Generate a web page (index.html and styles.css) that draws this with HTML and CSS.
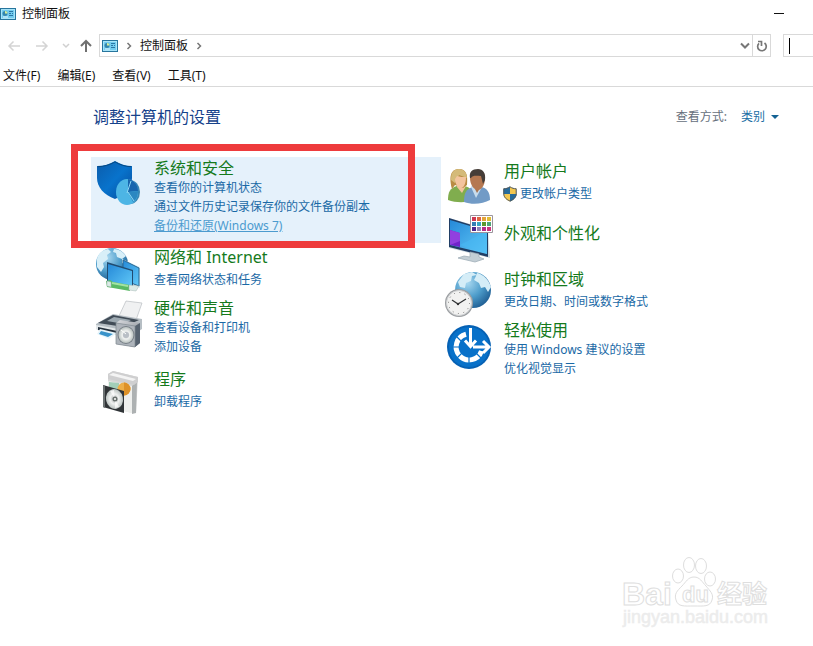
FILE: index.html
```html
<!DOCTYPE html>
<html lang="zh-CN">
<head>
<meta charset="utf-8">
<title>控制面板</title>
<link rel="stylesheet" href="styles.css">
</head>
<body>
<svg class="defs" aria-hidden="true">
  <defs>
    <linearGradient id="screen" x1="0" y1="0" x2="1" y2="1"><stop offset="0" stop-color="#2589d8"/><stop offset="1" stop-color="#62caf8"/></linearGradient>
    <linearGradient id="shieldBlue" x1="0" y1="0" x2="1" y2="1"><stop offset="0" stop-color="#0b5cab"/><stop offset=".5" stop-color="#0873cc"/><stop offset="1" stop-color="#064b9b"/></linearGradient>
    <radialGradient id="globe" cx=".35" cy=".3" r=".75"><stop offset="0" stop-color="#a9d8f0"/><stop offset=".55" stop-color="#4e9dcb"/><stop offset="1" stop-color="#205f94"/></radialGradient>
    <linearGradient id="metal" x1="0" y1="0" x2="1" y2="1"><stop offset="0" stop-color="#d8dade"/><stop offset="1" stop-color="#80878f"/></linearGradient>
    <radialGradient id="disc"><stop offset="0" stop-color="#9da3a4"/><stop offset=".5" stop-color="#f0f2f1"/><stop offset="1" stop-color="#bac2c0"/></radialGradient>
    <symbol id="panel" viewBox="0 0 16 12">
      <rect x=".5" y=".5" width="15" height="11" fill="#72ccef" stroke="#27759d"/>
      <rect x="1.5" y="1.5" width="13" height="9" fill="none" stroke="#a8e4f8"/>
      <circle cx="5" cy="5.5" r="2.5" fill="#3486ae"/><path d="M5 5.500V3a2.500 2.500 0 0 1 2.500 2.500Z" fill="#d9ef9a"/>
      <path d="M9 3.500h4M9 5.500h2M12 5.500h1M9 7.500h4" stroke="#2b77a5"/><path d="M3 9h5" stroke="#eafaff"/>
    </symbol>
  </defs>
</svg>

<header class="titlebar">
  <svg class="panel-icon" aria-hidden="true"><use href="#panel"/></svg>
  <span class="window-title">控制面板</span>
  <button class="minimize" type="button" aria-label="最小化"><svg width="10" height="10"><path d="M0 4.500h10" stroke="#111"/></svg></button>
</header>

<div class="navbar">
  <button class="nav-button nav-history" type="button" aria-label="后退"><svg width="14" height="14" fill="none" stroke="#d4d4d4" stroke-width="1.500"><path d="M13 7H2M6.500 2.500 2 7l4.500 4.500"/></svg></button>
  <button class="nav-button nav-history" type="button" aria-label="前进"><svg width="14" height="14" fill="none" stroke="#d4d4d4" stroke-width="1.500"><path d="M1 7h11M7.500 2.500 12 7l-4.500 4.500"/></svg></button>
  <button class="nav-button nav-recent" type="button" aria-label="最近"><svg width="8" height="6" fill="none" stroke="#d0d0d0" stroke-width="1.500"><path d="m1 1 3 3 3-3"/></svg></button>
  <button class="nav-button nav-up" type="button" aria-label="向上"><svg width="14" height="14" fill="none" stroke="#707070" stroke-width="2"><path d="M7 13V2M2 7l5-5 5 5"/></svg></button>
  <div class="address">
    <svg class="panel-icon" aria-hidden="true"><use href="#panel"/></svg>
    <svg class="crumb-arrow" viewBox="0 0 6 8" fill="none" stroke="#777" stroke-width="1.500"><path d="m1.500 1 3 3-3 3"/></svg>
    <a class="crumb" href="#">控制面板</a>
    <svg class="crumb-arrow" viewBox="0 0 6 8" fill="none" stroke="#777" stroke-width="1.500"><path d="m1.500 1 3 3-3 3"/></svg>
    <button class="address-drop" type="button" aria-label="历史记录"><svg width="10" height="8" fill="none" stroke="#777" stroke-width="2"><path d="m1 1.500 4 4 4-4"/></svg></button>
    <button class="refresh" type="button" aria-label="刷新"><svg width="12" height="14" fill="none" stroke="#777" stroke-width="1.700"><path d="M8.500 4A4.300 4.300 0 1 1 3 4.300M2 2.500h3.500V7"/></svg></button>
  </div>
  <div class="search">
    <input class="search-input" type="text" aria-label="搜索控制面板">
    <span class="caret"></span>
  </div>
</div>

<nav class="menubar">
  <button type="button">文件(F)</button>
  <button type="button">编辑(E)</button>
  <button type="button">查看(V)</button>
  <button type="button">工具(T)</button>
</nav>

<main class="content">
  <div class="heading">
    <h1>调整计算机的设置</h1>
    <div class="view-by">
      <label for="view">查看方式:</label>
      <span class="view-select">
        <select id="view"><option>类别</option></select>
        <svg width="8" height="4" aria-hidden="true"><path d="M0 0h8L4 4Z" fill="#146294"/></svg>
      </span>
    </div>
  </div>

  <div class="categories">
    <div class="column">
      <section class="category selected">
        <svg class="icon" viewBox="0 0 50 50" aria-hidden="true">
          <path d="M2 8C9 8 15 6 20 3c5 3 11 5 17 5v12c0 9-7 17-17 21C9 37 2 29 2 20Z" fill="url(#shieldBlue)"/>
          <path d="M2.700 8.700C9 8.700 15 6.700 20 3.900c5 2.800 10 4.800 16.300 4.800" fill="none" stroke="#064983"/>
          <ellipse cx="35" cy="34" rx="10" ry="12" fill="#3886b4"/>
          <ellipse cx="32" cy="34" rx="11" ry="13" fill="#4db5e5"/>
          <path d="M33 34V21c6 1 10 6 10 12Z" fill="#1765ae"/><path d="m33 34 10-1c0 5-2 9-5 11Z" fill="#2b87c1"/>
          <path d="m32 35 4-12M33 34l6 9" stroke="#8ed8f4" fill="none"/>
        </svg>
        <div class="details">
          <h2><a href="#">系统和安全</a></h2>
          <a href="#">查看你的计算机状态</a>
          <a href="#">通过文件历史记录保存你的文件备份副本</a>
          <a class="hovered" href="#">备份和还原(Windows 7)</a>
        </div>
        <div class="marker"></div>
      </section>

      <section class="category">
        <svg class="icon" viewBox="0 0 50 50" aria-hidden="true">
          <circle cx="17" cy="17" r="16" fill="url(#globe)"/>
          <path d="M2 12c1-5 5-9 11-10l3 3-4 3 1 4-5 4 1 4-3 5-4-5ZM19 2c5 0 9 3 12 7l-4 3-5-2-1-4-3-1Z" fill="#d8eff8"/>
          <path d="m27 12 18 8v21l-8-4V20l-10-4Z" fill="#d8f0fa"/><path d="m28 13 16 8v18l-16-6Z" fill="url(#screen)" stroke="#28658f"/>
          <path d="m12 15 26 8v20l-26-7Z" fill="#214c71"/><path d="m13 17 24 7v17l-24-6Z" fill="url(#screen)"/>
          <path d="m11 34 4-1 3 2 17 3v6l-17-3-6-1Z" fill="#59ba64"/><path d="m17 36 16 3" stroke="#a4e2a1" stroke-width="2"/>
          <path d="m12 34 4 1v5l-4-1ZM34 38l10 1-3 5-7-1Z" fill="#dcebe7" stroke="#a5b7b5" stroke-width=".5"/>
        </svg>
        <div class="details single">
          <h2><a href="#">网络和 Internet</a></h2>
          <a href="#">查看网络状态和任务</a>
        </div>
      </section>

      <section class="category tall">
        <svg class="icon" viewBox="0 0 50 50" aria-hidden="true">
          <path d="m31 3 16 2-6 17-17-4Z" fill="#f0f1f2" stroke="#b9bdc1" stroke-width=".7"/>
          <path d="m1 26 17-10 29 5v10L33 40 1 31Z" fill="#b6bec4"/>
          <path d="m3 25 15-8 26 5-15 7Z" fill="#414c57"/><path d="m12 23 7-4 17 3-7 4Z" fill="#9da9b1"/>
          <path d="m1 27 28 5v5L1 31Z" fill="#e2e7e9"/><path d="m3 29 24 5v3L3 32Z" fill="#26323e"/>
          <path d="m5 31 17 4-8 6-12-5Z" fill="#e7f5fb"/><path d="m6 33 12 3-5 3-9-3Z" fill="#3993ca"/>
          <path d="m21 25 4-3 20 3v20l-5 4-19-3Z" fill="url(#metal)"/><path d="m40 28 5-3v20l-5 4Z" fill="#56626f"/>
          <path d="m21 25 19 3v21l-19-3Z" fill="#aeb4bb" stroke="#808991" stroke-width=".7"/>
          <ellipse cx="31" cy="37" rx="8.500" ry="9" fill="#777f87"/><ellipse cx="31" cy="37" rx="7.500" ry="8" fill="url(#disc)"/>
          <circle cx="31" cy="37" r="3" fill="#b9bfc6"/><path d="m26 32 5 4" stroke="#fff"/>
        </svg>
        <div class="details">
          <h2><a href="#">硬件和声音</a></h2>
          <a href="#">查看设备和打印机</a>
          <a href="#">添加设备</a>
        </div>
      </section>

      <section class="category">
        <svg class="icon" viewBox="0 0 50 50" aria-hidden="true">
          <path d="m13 5 5-3 25 6-2 36-8-1-20-6Z" fill="#d8d8d8"/><path d="m13 12 24 5v27l-24-5Z" fill="#eeefed"/>
          <path d="m37 17 5-5-1 32-4 1Z" fill="#adb1b2"/><path d="m13 5 5-3 25 6v5l-4 3-26-6Z" fill="#cfcfd0"/><path d="m14 6 4-2 23 6-3 2Z" fill="#f4f4f4"/>
          <path d="m14 13 10 1v11l-10-3Z" fill="#a2ceb8"/><circle cx="29" cy="20" r="6.500" fill="#edae48"/><path d="M29 13.500a6.500 6.500 0 0 1 0 13V20Z" fill="#dd9128"/>
          <path d="m8 16 21 6v22L8 38Z" fill="#303437"/><path d="m8 16 2 1v22l-2-1Z" fill="#6b7172"/>
          <ellipse cx="19.500" cy="30" rx="8.500" ry="10" transform="rotate(-12 19.500 30)" fill="url(#disc)"/><path d="m20 30-5-8 4-1ZM20 30l4 8-4 1Z" fill="#fff" opacity=".7"/>
          <circle cx="20" cy="30" r="2.500" fill="#69716e"/><circle cx="20" cy="30" r="1" fill="#fff"/>
        </svg>
        <div class="details single">
          <h2><a href="#">程序</a></h2>
          <a href="#">卸载程序</a>
        </div>
      </section>
    </div>

    <div class="column">
      <section class="category roomy">
        <svg class="icon" viewBox="0 0 50 50" aria-hidden="true">
          <path d="M3 39c0-8 2-12 9-14h7c6 1 10 5 10 14-8 3-18 3-26 0Z" fill="#80ad4e"/><path d="m12 26 5 6 4-7-2-5h-6Z" fill="#f1c29b"/>
          <path d="M7 28C4 17 5 8 14 8c7 0 9 5 8 16l-4 3-8-3Z" fill="#b98b43"/><path d="M6 19c0-7 2-11 8-11 5 0 8 4 8 9l-8-3-4 8Z" fill="#d4ba79"/>
          <path d="M12 15c3 1 6 1 9 1 0 8-3 11-5 11-3 0-6-4-6-9Z" fill="#f3c49e"/>
          <path d="M19 41c0-9 2-13 9-15h8c6 1 9 5 9 13-7 4-18 5-26 2Z" fill="#729bc6"/><path d="m26 26 5 11 6-11-2-4h-7Z" fill="#c8dced"/><path d="m27 22 5 10 5-8-2-5h-7Z" fill="#a87450"/>
          <path d="M25 17c0-5 3-8 7-8 5 0 8 3 8 8 0 8-4 12-7 12-4 0-8-5-8-12Z" fill="#b57851"/><path d="M25 17c-1-6 2-9 8-9 5 0 8 4 7 11l-2 4-2-8c-5 0-8-1-10 2Z" fill="#453d38"/>
        </svg>
        <div class="details single">
          <h2><a href="#">用户帐户</a></h2>
          <a class="with-shield" href="#"><svg width="14" height="16" viewBox="0 0 14 16" aria-hidden="true"><path d="M7 .5c2 1.500 4 2 6.500 2V8c0 3.500-3 6-6.500 7.500C3.500 14 .5 11.500.5 8V2.500C3 2.500 5 2 7 .5Z" fill="#f5c84f"/><path d="M7 .5V8H.5V2.500C3 2.500 5 2 7 .5ZM7 8h6.500c0 3.500-3 6-6.500 7.500Z" fill="#286c9b"/><path d="M7 .8c2 1.400 4 1.900 6.200 2V8c0 3.300-2.900 5.600-6.200 7.100C3.700 13.600.8 11.300.8 8V2.800C3 2.700 5 2.200 7 .8Z" fill="none" stroke="#4c5865"/></svg>更改帐户类型</a>
        </div>
      </section>

      <section class="category roomy">
        <svg class="icon" viewBox="0 0 50 50" aria-hidden="true">
          <path d="m4 3 39 11 2 29L4 33Z" fill="#d1dce3"/><path d="m4 3 39 12v27L4 32Z" fill="#213e65"/><path d="m5 5 37 11v23L5 30Z" fill="url(#screen)"/>
          <path d="m5 15 10 3v14L5 30Z" fill="#7124cb"/><path d="m5 15 10 3v8L5 30Z" fill="#9140df"/><path d="m15 30 27-14v23Z" fill="#48baf4" opacity=".55"/>
          <path d="m25 37 9 2v3l5 2-9 3-17-4 6-2 6 1Z" fill="#c3ced5" stroke="#98a7b1" stroke-width=".7"/>
          <path d="M25.500.5h22v17h-22Z" fill="#fff" stroke="#9b949d"/>
          <path d="M27 2h4v4h-4Z" fill="#cf3852"/><path d="M32 2h4v4h-4Z" fill="#df6541"/><path d="M37 2h4v4h-4Z" fill="#e4a338"/><path d="M42 2h4v4h-4Z" fill="#e0bc35"/>
          <path d="M27 7h4v4h-4Z" fill="#337eb5"/><path d="M32 7h4v4h-4Z" fill="#36a5c2"/><path d="M37 7h4v4h-4Z" fill="#5b982b"/><path d="M42 7h4v4h-4Z" fill="#4da575"/>
          <path d="M27 12h4v4h-4Z" fill="#4b278e"/><path d="M32 12h4v4h-4Z" fill="#9183b7"/><path d="M37 12h4v4h-4Z" fill="#b62c86"/><path d="M42 12h4v4h-4Z" fill="#cc347c"/>
        </svg>
        <div class="details title-only">
          <h2><a href="#">外观和个性化</a></h2>
        </div>
      </section>

      <section class="category">
        <svg class="icon" viewBox="0 0 50 50" aria-hidden="true">
          <circle cx="28" cy="21" r="18" fill="url(#globe)"/><path d="m13 13 6-8 8-2 5 3-5 1-1 5-5 2-1 5-5-1ZM32 4c6 1 12 7 14 14l-3 5-3-5-4 1-2-5-5-3 2-4Z" fill="#d5edf7"/>
          <circle cx="14" cy="34" r="14" fill="#9c9fa2"/><circle cx="14" cy="34" r="12.500" fill="#f2f2f1" stroke="#d0d2d4"/>
          <circle cx="14" cy="34" r="10.500" fill="none" stroke="#777" stroke-width="1" stroke-dasharray="1 4.500"/><path d="m7 31 6 4 8-5" fill="none" stroke="#303234" stroke-width="1.200"/><circle cx="13" cy="35" r="1.200" fill="#333"/>
        </svg>
        <div class="details single">
          <h2><a href="#">时钟和区域</a></h2>
          <a href="#">更改日期、时间或数字格式</a>
        </div>
      </section>

      <section class="category tall">
        <svg class="icon" viewBox="0 0 50 50" aria-hidden="true">
          <circle cx="24" cy="27" r="22" fill="#0661b4"/><circle cx="24" cy="27" r="20" fill="#0871c9"/>
          <path d="M21 14.300A13 13 0 1 0 36.500 31" fill="none" stroke="#fff" stroke-width="5"/>
          <path d="m12 17 6 6M8 27h7M12 38l6-6M24 36v8M31 33l5 5" stroke="#0871c9" stroke-width="1.200"/>
          <path d="M25.500 8v18M20 20.500l5.500 6 5.500-6M28 27h16M38 21l6 6-6 6" fill="none" stroke="#fff" stroke-width="3"/>
        </svg>
        <div class="details">
          <h2><a href="#">轻松使用</a></h2>
          <a href="#">使用 Windows 建议的设置</a>
          <a href="#">优化视觉显示</a>
        </div>
      </section>
    </div>
  </div>
</main>

<svg class="watermark" width="152" height="76" viewBox="0 0 152 76" fill="#fff" stroke="#dedede">
  <text class="mark-latin" x="2" y="49">Bai</text>
  <ellipse cx="58" cy="20" rx="5.500" ry="7"/><ellipse cx="69" cy="9" rx="5.500" ry="7.500"/><ellipse cx="81" cy="10" rx="5.500" ry="7.500"/><ellipse cx="90" cy="23" rx="5.500" ry="7"/>
  <path d="M74 21c-6 0-8 5-12 9-5 5-8 8-6 14 2 7 8 6 18 6s16 1 18-6c2-6-2-9-6-14-4-4-6-9-12-9Z"/>
  <text class="mark-du" x="62" y="46">du</text>
  <text class="mark-cjk" x="97" y="47">经验</text>
  <text class="mark-url" x="3" y="67">jingyan.baidu.com</text>
</svg>
</body>
</html>
```
FILE: styles.css
```css
* {
  box-sizing: border-box;
}

body {
  margin: 0;
  min-height: 100vh;
  position: relative;
  overflow-x: hidden;
  background: #fff;
  color: #111;
  font: 12px/19px "Noto Sans", "Noto Sans CJK SC", sans-serif;
}

button,
input,
select {
  margin: 0;
  padding: 0;
  border: 0;
  background: none;
  color: inherit;
  font: inherit;
}

a {
  color: inherit;
  text-decoration: none;
}

svg {
  display: block;
  flex: none;
}

.defs {
  position: absolute;
  width: 0;
  height: 0;
}

.panel-icon {
  width: 16px;
  height: 12px;
}

.titlebar {
  display: flex;
  align-items: center;
  gap: 6px;
  height: 27px;
}

.minimize {
  margin-left: auto;
  margin-right: 29px;
}

.navbar {
  display: flex;
  align-items: center;
  height: 37px;
}

.nav-button {
  display: flex;
  justify-content: center;
  align-items: center;
  height: 23px;
}

.nav-history {
  width: 28px;
}

.nav-recent {
  width: 20px;
}

.nav-up {
  width: 19px;
}

.address {
  display: flex;
  flex: 1;
  align-items: center;
  height: 23px;
  margin-left: 4px;
  padding-left: 2px;
  border: 1px solid #d9d9d9;
}

.crumb-arrow {
  width: 6px;
  height: 8px;
  margin: 0 8px;
}

.address-drop {
  margin-left: auto;
  margin-right: 2px;
}

.refresh {
  display: flex;
  justify-content: center;
  align-items: center;
  align-self: stretch;
  width: 18px;
  border-left: 1px solid #d9d9d9;
}

.search {
  position: relative;
  width: 30px;
  height: 23px;
  margin-left: 12px;
  border: 1px solid #d9d9d9;
  border-right: 0;
}

.search-input {
  display: block;
  width: 100%;
  height: 100%;
  outline: 0;
}

.caret {
  position: absolute;
  left: 5px;
  top: 3px;
  width: 1px;
  height: 16px;
  background: #000;
}

.menubar {
  display: flex;
  gap: 17px;
  height: 23px;
  padding: 2px 3px;
  border-bottom: 1px solid #d9d9d9;
}

.content {
  padding: 20px 22px 20px 91px;
}

.heading {
  display: flex;
  justify-content: space-between;
  margin-bottom: 30px;
  padding: 0 12px 0 2px;
  line-height: 20px;
}

h1,
h2 {
  margin: 0;
  font-size: 16px;
  font-weight: 400;
  line-height: 20px;
}

h1 {
  color: #15428b;
}

h2 {
  color: #157a1c;
}

.view-by {
  display: flex;
  gap: 14px;
  color: #666f7c;
}

.view-select {
  display: flex;
  align-items: center;
  gap: 6px;
  color: #1a6ea5;
}

.view-select select {
  appearance: none;
  width: 24px;
}

.categories {
  display: grid;
  grid-template-columns: repeat(2, minmax(0, 350px));
  align-items: start;
}

.category {
  display: flex;
  gap: 9px;
  min-height: 51px;
  padding: 4px 4px 0;
}

.icon {
  width: 50px;
  height: 50px;
  margin-bottom: -10px;
}

.selected {
  position: relative;
  min-height: 86px;
  padding-top: 1px;
  background: #e5f1fb;
}

.roomy {
  min-height: 54px;
}

.tall {
  min-height: 71px;
}

.details {
  display: flex;
  flex-direction: column;
  align-items: flex-start;
  color: #1a69a6;
  white-space: nowrap;
}

.single h2 {
  margin-bottom: 3px;
}

.title-only {
  padding-top: 8px;
}

.hovered {
  color: #4c9bcf;
  text-decoration: underline;
}

.with-shield {
  display: flex;
  align-items: center;
  gap: 3px;
  margin-left: -1px;
}

.marker {
  position: absolute;
  inset: -13px 26px -5px -20px;
  border: 7px solid #ee3b3c;
  pointer-events: none;
}

.watermark {
  position: absolute;
  right: 41px;
  bottom: 14px;
  stroke-width: 1px;
}

.mark-latin {
  font: 700 32px "Liberation Sans", sans-serif;
}

.mark-du {
  font: 700 22px "Liberation Sans", sans-serif;
}

.mark-cjk {
  font: 700 25px "Noto Sans CJK SC", sans-serif;
}

.mark-url {
  fill: #ececec;
  stroke: #ececec;
  stroke-width: 0.5px;
  font: 400 18px "Liberation Sans", sans-serif;
}
```
